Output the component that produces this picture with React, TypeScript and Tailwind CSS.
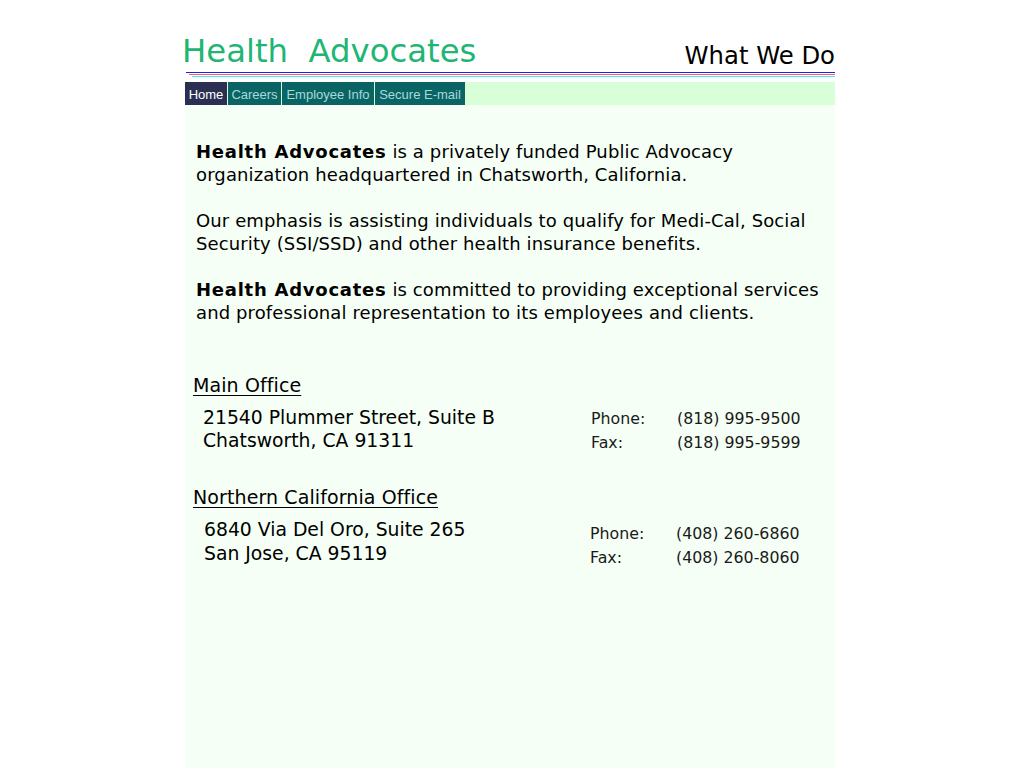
const navItems = [
  { label: 'Home', active: true, w: 'w-[42px]' },
  { label: 'Careers', active: false, w: 'w-[53px]' },
  { label: 'Employee Info', active: false, w: 'w-[92px]' },
  { label: 'Secure E-mail', active: false, w: 'w-[90px]' },
];

const offices = [
  {
    name: 'Main Office',
    lines: ['21540 Plummer Street, Suite B', 'Chatsworth, CA 91311'],
    phone: '(818) 995-9500',
    fax: '(818) 995-9599',
  },
  {
    name: 'Northern California Office',
    lines: ['6840 Via Del Oro, Suite 265', 'San Jose, CA 95119'],
    phone: '(408) 260-6860',
    fax: '(408) 260-8060',
  },
];

export default function App() {
  return (
    <div className="min-h-[768px] bg-white text-black font-['DejaVu_Sans',sans-serif]">
      <div className="ml-[185px] w-[650px] min-h-[768px] flex flex-col">
        {/* header */}
        <div className="h-[82px] flex flex-col">
          <div className="flex items-end justify-between h-[72px] pb-[2px]">
            <div className="-ml-[3px] text-[32.3px] leading-[38px] text-[#1fb574] whitespace-pre">Health  Advocates</div>
            <div className="text-[24.3px] leading-[28px]">What We Do</div>
          </div>
          <div className="ml-[1px] h-px bg-[#2020e0]" />
          <div className="ml-[4px] mt-px h-px bg-[#ff5a6a]" />
          <div className="ml-[7px] mt-px h-px bg-[#3cf0f0]" />
        </div>

        {/* nav */}
        <div className="flex h-[23px] bg-[#d9ffd9] font-['Liberation_Sans',sans-serif] text-[13px]">
          {navItems.map((n) => (
            <div
              key={n.label}
              className={`${n.w} mr-px pt-[3px] flex items-center justify-center ${
                n.active ? 'bg-[#2b3052] text-white' : 'bg-[#0b6464] text-[#a8dada]'
              }`}
            >
              {n.label}
            </div>
          ))}
        </div>

        {/* content */}
        <div className="flex-1 bg-[#f5fff5]">
          <div className="pl-[11px] pt-[35px] pr-[4px] text-[18px] leading-[23px] tracking-[0.12px] whitespace-nowrap">
            <p>
              <b className="tracking-[0.75px]">Health Advocates</b> is a privately funded Public Advocacy
              <br />
              organization headquartered in Chatsworth, California.
            </p>
            <p className="mt-[23px]">
              Our emphasis is assisting individuals to qualify for Medi-Cal, Social
              <br />
              Security (SSI/SSD) and other health insurance benefits.
            </p>
            <p className="mt-[23px]">
              <b className="tracking-[0.75px]">Health Advocates</b> is committed to providing exceptional services
              <br />
              and professional representation to its employees and clients.
            </p>
          </div>

          <div className="mt-[50px] flex flex-col gap-[31px]">
            {offices.map((o, i) => (
              <div key={o.name}>
                <div className="pl-[8px] text-[19px] leading-[23px] tracking-[0.1px]">
                  <span className="underline underline-offset-[3px] decoration-1">{o.name}</span>
                </div>
                <div className="mt-[9px] flex">
                  <div
                    className={`${i === 0 ? 'pl-[18px] w-[406px]' : 'pl-[19px] w-[405px]'} text-[18.8px] whitespace-nowrap ${
                      i === 0 ? 'leading-[23px]' : 'leading-[24px]'
                    }`}
                  >
                    {o.lines.map((l) => (
                      <div key={l}>{l}</div>
                    ))}
                  </div>
                  <div className={`text-[15.8px] leading-[24px] text-[#1a1a1a] ${i === 0 ? 'pt-px' : 'pt-[4px]'}`}>
                    <div className="flex">
                      <span className="w-[86px]">Phone:</span>
                      <span>{o.phone}</span>
                    </div>
                    <div className="flex">
                      <span className="w-[86px]">Fax:</span>
                      <span>{o.fax}</span>
                    </div>
                  </div>
                </div>
              </div>
            ))}
          </div>
        </div>
      </div>
    </div>
  );
}
